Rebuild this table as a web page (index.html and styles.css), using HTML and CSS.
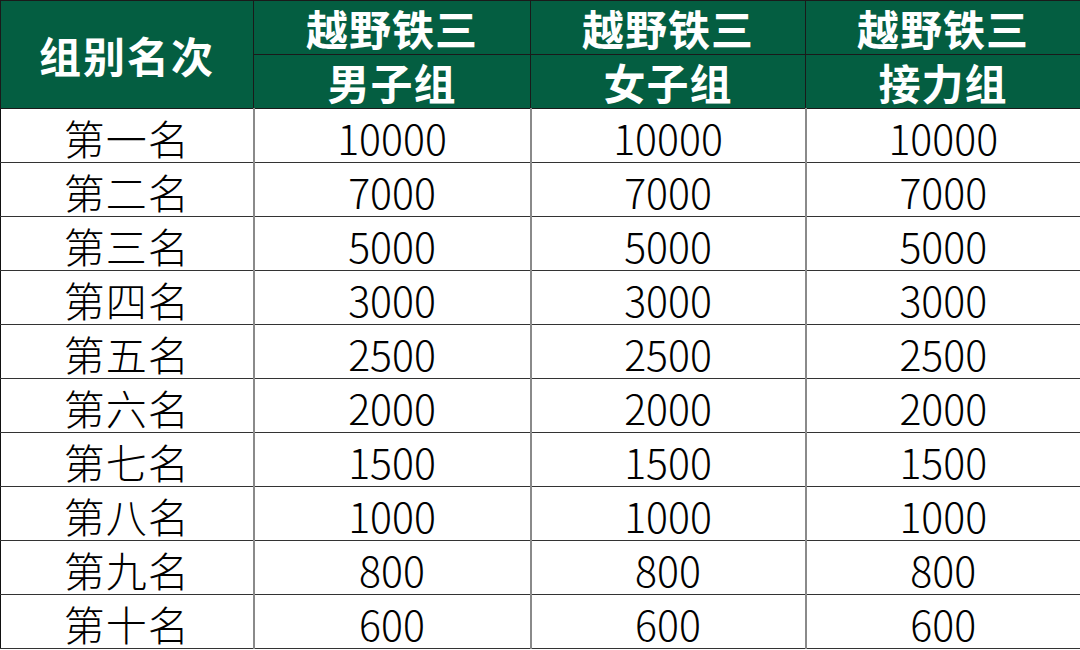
FILE: index.html
```html
<!DOCTYPE html>
<html lang="zh">
<head>
<meta charset="utf-8">
<link rel="stylesheet" href="styles.css">
</head>
<body>
<table class="prize">
  <colgroup>
    <col class="c1"><col class="c2"><col class="c3"><col class="c4">
  </colgroup>
  <thead>
    <tr class="hrow">
      <th rowspan="2" class="first">组别名次</th>
      <th>越野铁三</th>
      <th>越野铁三</th>
      <th>越野铁三</th>
    </tr>
    <tr class="hrow">
      <th>男子组</th>
      <th>女子组</th>
      <th>接力组</th>
    </tr>
  </thead>
  <tbody>
    <tr><td>第一名</td><td>10000</td><td>10000</td><td>10000</td></tr>
    <tr><td>第二名</td><td>7000</td><td>7000</td><td>7000</td></tr>
    <tr><td>第三名</td><td>5000</td><td>5000</td><td>5000</td></tr>
    <tr><td>第四名</td><td>3000</td><td>3000</td><td>3000</td></tr>
    <tr><td>第五名</td><td>2500</td><td>2500</td><td>2500</td></tr>
    <tr><td>第六名</td><td>2000</td><td>2000</td><td>2000</td></tr>
    <tr><td>第七名</td><td>1500</td><td>1500</td><td>1500</td></tr>
    <tr><td>第八名</td><td>1000</td><td>1000</td><td>1000</td></tr>
    <tr><td>第九名</td><td>800</td><td>800</td><td>800</td></tr>
    <tr><td>第十名</td><td>600</td><td>600</td><td>600</td></tr>
  </tbody>
</table>
</body>
</html>
```
FILE: styles.css
```css
html, body {
  margin: 0;
  padding: 0;
  background: #ffffff;
}
body {
  width: 1080px;
  height: 650px;
  overflow: hidden;
  font-family: "Noto Sans CJK SC", "Noto Sans", sans-serif;
}
.prize {
  width: 1080px;
  border-collapse: collapse;
  table-layout: fixed;
  border: 1px solid #111;
}
.c1 { width: 253px; }
.c2 { width: 277px; }
.c3 { width: 275px; }
.c4 { width: 275px; }
.prize tr.hrow { height: 54px; }
.prize tbody tr { height: 54px; }
.prize th {
  background: #045e41;
  color: #ffffff;
  font-weight: 700;
  font-size: 42px;
  line-height: 1;
  padding: 0;
  border: 1px solid #1a1a1a;
  text-align: center;
  vertical-align: middle;
  letter-spacing: 1px;
}
.prize th.first {
  letter-spacing: 2px;
}
.prize td {
  font-size: 41px;
  font-weight: 300;
  line-height: 1;
  padding: 3px 0 0 0;
  color: #000;
  text-align: center;
  vertical-align: middle;
  border-top: 1px solid #333;
  border-bottom: 1px solid #333;
  border-left: 2px solid #8a8a8a;
  border-right: 2px solid #8a8a8a;
}
.prize td:first-child { border-left: 1px solid #111; letter-spacing: 1px; }
.prize td:last-child { border-right: 1px solid #111; }
```
